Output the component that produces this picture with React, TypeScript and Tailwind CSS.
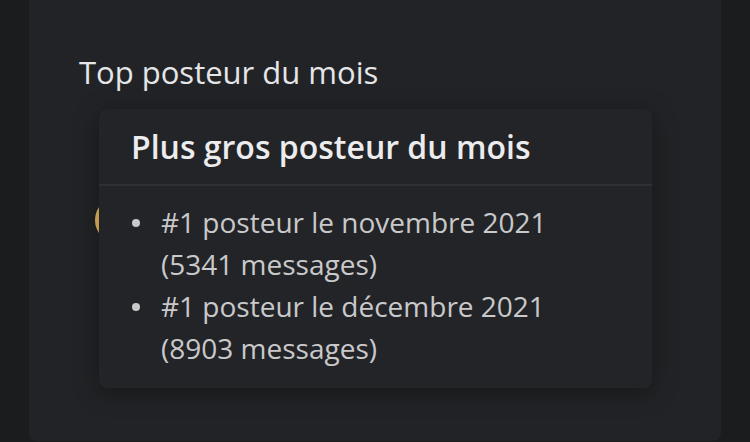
import React from 'react';

const items = [
  '#1 posteur le novembre 2021 (5341 messages)',
  '#1 posteur le décembre 2021 (8903 messages)',
];

export default function App() {
  return (
    <div
      className="w-[750px] h-[442px] overflow-hidden bg-[#1b1c1e] px-[29px]"
      style={{ fontFamily: '"Open Sans", "Noto Sans", sans-serif' }}
    >
      <div className="relative h-[441px] rounded-b-lg bg-[#222326] pl-[50px] pt-[52px]">
        <h2 className="text-[31px] leading-[40px] font-medium text-[#e6e6e8]">Top posteur du mois</h2>

        {/* avatar, mostly hidden under the popover */}
        <div className="ml-[16px] mt-[105px] h-[46px] w-[46px] rounded-full border-[4px] border-[#e6b85c] bg-[#3a3b3f]" />

        {/* popover */}
        <div className="absolute left-[70px] top-[109px] w-[553px] rounded-lg bg-[#232427] shadow-[0_4px_24px_rgba(0,0,0,0.35)]">
          <div className="flex h-[77px] items-center border-b-2 border-[#2f3033] pl-[32px]">
            <h3 className="text-[32px] leading-[40px] font-semibold text-[#ececee]">Plus gros posteur du mois</h3>
          </div>
          <ul className="pb-[19px] pl-[33px] pr-[30px] pt-[15px]">
            {items.map((t) => (
              <li key={t} className="flex text-[28px] leading-[42px] text-[#c9c9cb]">
                <span className="mt-[18px] mr-[21px] h-[8px] w-[8px] shrink-0 rounded-full bg-[#c9c9cb]" />
                <span>{t}</span>
              </li>
            ))}
          </ul>
        </div>
      </div>
    </div>
  );
}
